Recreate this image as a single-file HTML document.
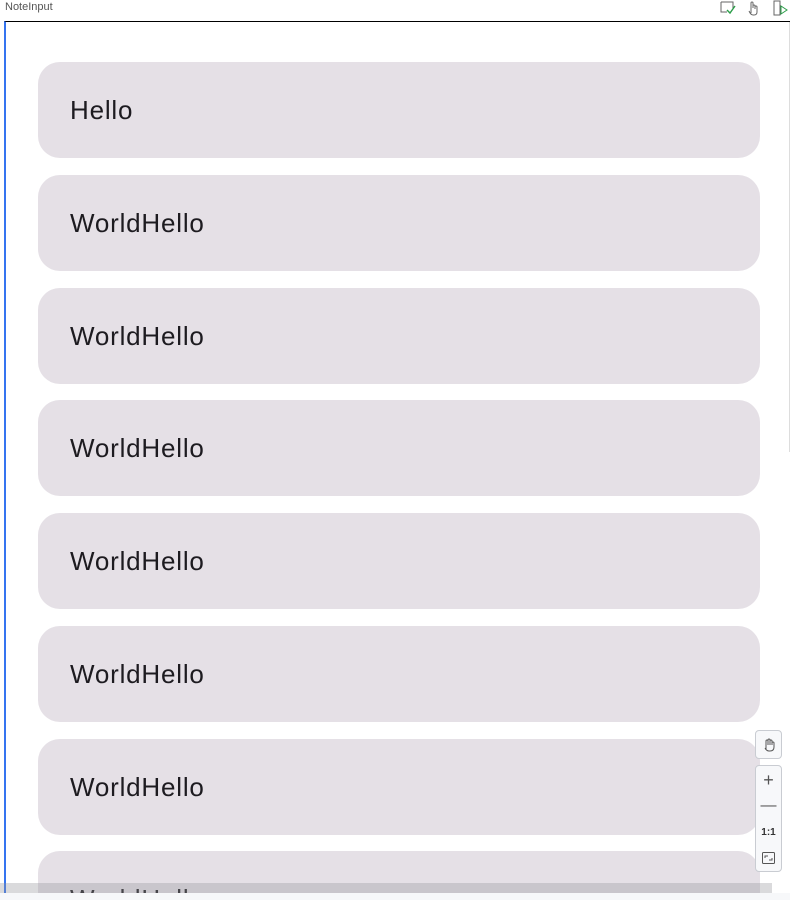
<!DOCTYPE html>
<html><head><style>
*{margin:0;padding:0;box-sizing:border-box}
html{overflow:hidden}
body{width:790px;height:900px;background:#fff;position:relative;overflow:hidden;font-family:"Liberation Sans",sans-serif}
.title{position:absolute;left:5px;top:1px;font-size:11px;color:#555}
.frame{position:absolute;left:4px;top:21px;width:786px;height:872px;border-top:1.5px solid #000;border-left:2px solid #3574f0;overflow:hidden}
.card{position:absolute;left:32px;width:722px;height:96px;background:#e5e0e6;border-radius:22px;font-size:26px;letter-spacing:0.8px;color:#1d1b20;padding-left:32px;line-height:96px}
.sb{position:absolute;left:0;top:883px;width:772px;height:10px;background:rgba(150,150,155,0.35)}
.bot{position:absolute;left:0;top:893px;width:790px;height:7px;background:#f7f8fa}
.ctl{position:absolute;left:755px;background:#f7f8fa;border:1px solid #c9ccd2;border-radius:4px}
.ctl div{height:26px;display:flex;align-items:center;justify-content:center;font-size:10px;color:#333}
</style></head><body>
<div class="title">NoteInput</div>
<svg style="position:absolute;left:719px;top:0" width="18" height="16"><path d="M2 2h12v6M2 2v10h6" stroke="#666" fill="none"/><path d="M8 10l3 3 5-7" stroke="#2a9d48" stroke-width="1.4" fill="none"/></svg>
<svg style="position:absolute;left:745px;top:0" width="16" height="16"><path d="M6 13V3a1 1 0 012 0v5M8 6a1 1 0 012 0v3M10 7a1 1 0 012 0v5c0 2-1 3-3 3H8c-2 0-3-2-4-4" stroke="#666" fill="none"/></svg>
<svg style="position:absolute;left:772px;top:0" width="16" height="16"><path d="M2 1h6v14H2z" stroke="#666" fill="none"/><path d="M9 6l6 4-6 4z" stroke="#2a9d48" fill="none"/></svg>
<div class="frame">
<div class="card" style="top:40px">Hello</div>
<div class="card" style="top:153px">WorldHello</div>
<div class="card" style="top:266px">WorldHello</div>
<div class="card" style="top:378px">WorldHello</div>
<div class="card" style="top:491px">WorldHello</div>
<div class="card" style="top:604px">WorldHello</div>
<div class="card" style="top:717px">WorldHello</div>
<div class="card" style="top:829px">WorldHello</div>
</div>
<div style="position:absolute;left:789px;top:22px;width:1px;height:430px;background:#ddd"></div>
<div class="sb"></div>
<div class="bot"></div>
<div class="ctl" style="top:730px;width:27px;height:29px"><div style="height:27px"><svg width="14" height="14"><path d="M4 12V6M4 7V3a1 1 0 012 0v4M6 3V2a1 1 0 012 0v5M8 3a1 1 0 012 0v4M10 5a1 1 0 012 0v4c0 3-2 4-4 4H7c-2 0-3-1-4-3" stroke="#555" fill="none"/></svg></div></div>
<div class="ctl" style="top:765px;width:27px;height:107px;padding-top:1px">
<div style="font-size:18px;font-weight:300;color:#555">+</div>
<div style="font-size:16px;color:#555">—</div>
<div style="font-weight:bold">1:1</div>
<div><svg width="13" height="12"><rect x="0.5" y="0.5" width="12" height="11" rx="1" stroke="#555" fill="none"/><path d="M3 6V4h3M10 6v2H7" stroke="#555" fill="none"/></svg></div>
</div>
</body></html>
